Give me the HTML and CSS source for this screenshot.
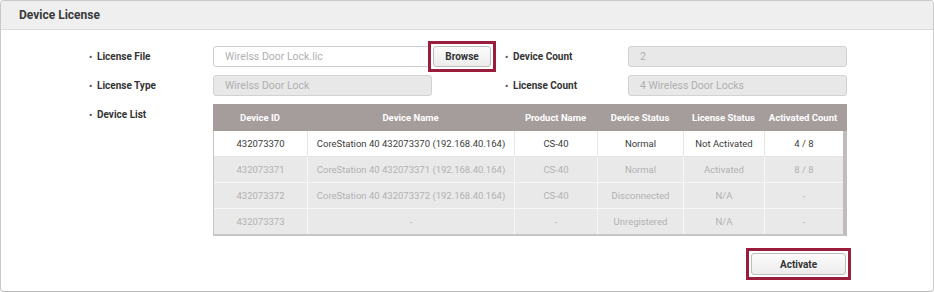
FILE: index.html
```html
<!DOCTYPE html>
<html lang="en">
<head>
    <meta charset="UTF-8">
    <meta name="viewport" content="width=device-width, initial-scale=1.0">
    <title>Device License</title>
    <link rel="stylesheet" href="styles.css">
</head>
<body>

<div class="panel">
    <div class="panel-head">Device License</div>

    <div class="panel-body">
        <div class="form-grid">
            <label class="field-label">License File</label>
            <div class="field-box">
                <input type="text" class="text-input file-input" value="Wirelss Door Lock.lic" readonly>
                <span class="marked mark-browse"><button class="btn btn-browse">Browse</button></span>
            </div>
            <label class="field-label">Device Count</label>
            <div class="field-box">
                <input type="text" class="text-input disabled" value="2" readonly>
            </div>

            <label class="field-label">License Type</label>
            <div class="field-box">
                <input type="text" class="text-input disabled" value="Wirelss Door Lock" readonly>
            </div>
            <label class="field-label">License Count</label>
            <div class="field-box">
                <input type="text" class="text-input disabled" value="4 Wireless Door Locks" readonly>
            </div>

            <label class="field-label">Device List</label>
            <div class="device-list">
                <div class="list-row list-head">
                    <div class="cell">Device ID</div>
                    <div class="cell">Device Name</div>
                    <div class="cell">Product Name</div>
                    <div class="cell">Device Status</div>
                    <div class="cell">License Status</div>
                    <div class="cell">Activated Count</div>
                    <div class="cell"></div>
                </div>
                <div class="list-body">
                    <div class="list-row active">
                        <div class="cell">432073370</div>
                        <div class="cell">CoreStation 40 432073370 (192.168.40.164)</div>
                        <div class="cell">CS-40</div>
                        <div class="cell">Normal</div>
                        <div class="cell">Not Activated</div>
                        <div class="cell">4 / 8</div>
                    </div>
                    <div class="list-row">
                        <div class="cell">432073371</div>
                        <div class="cell">CoreStation 40 432073371 (192.168.40.164)</div>
                        <div class="cell">CS-40</div>
                        <div class="cell">Normal</div>
                        <div class="cell">Activated</div>
                        <div class="cell">8 / 8</div>
                    </div>
                    <div class="list-row">
                        <div class="cell">432073372</div>
                        <div class="cell">CoreStation 40 432073372 (192.168.40.164)</div>
                        <div class="cell">CS-40</div>
                        <div class="cell">Disconnected</div>
                        <div class="cell">N/A</div>
                        <div class="cell">-</div>
                    </div>
                    <div class="list-row last">
                        <div class="cell">432073373</div>
                        <div class="cell">-</div>
                        <div class="cell">-</div>
                        <div class="cell">Unregistered</div>
                        <div class="cell">N/A</div>
                        <div class="cell">-</div>
                    </div>
                </div>
            </div>
        </div>

        <div class="actions">
            <span class="marked"><button class="btn btn-activate">Activate</button></span>
        </div>
    </div>
</div>

</body>
</html>
```

FILE: styles.css
```css
body {
    margin: 0;
    background-color: #ffffff;
    font-family: Roboto, "Liberation Sans", Arial, sans-serif;
    color: #444444;
}
.panel {
    width: 932px;
    height: 290px;
    border: 1px solid #c9c9c9;
    border-bottom-color: #b9b9b9;
    border-radius: 4px;
    overflow: hidden;
}
.panel-head {
    height: 28px;
    line-height: 28px;
    padding-left: 18px;
    background-color: #efefef;
    border-bottom: 1px solid #dcdcdc;
    font-size: 12px;
    font-weight: bold;
    color: #3a3a3a;
}
.panel-body {
    padding: 16px 0 0 88px;
}
.form-grid {
    display: grid;
    grid-template-columns: 124px 292px 123px 219px;
    row-gap: 8px;
}
.field-label {
    height: 21px;
    line-height: 21px;
    font-size: 10px;
    font-weight: bold;
    color: #333333;
}
.field-label::before {
    content: "•";
    display: inline-block;
    width: 8px;
    color: #555555;
    font-size: 9px;
}
.field-box {
    display: flex;
    align-items: center;
}
.text-input {
    box-sizing: border-box;
    width: 219px;
    height: 21px;
    padding: 0 11px;
    border: 1px solid #cfcfcf;
    border-radius: 3px;
    background-color: #ffffff;
    font-family: Roboto, "Liberation Sans", Arial, sans-serif;
    font-size: 10.5px;
    color: #b0b0b0;
    outline: none;
}
.text-input.file-input {
    width: 217px;
}
.text-input.disabled {
    background-color: #e8e8e8;
    border-color: #d2d2d2;
}
.marked {
    display: inline-flex;
    padding: 2px;
    border: 3px solid #9b1d3d;
    background-color: #ffffff;
}
.mark-browse {
    margin: -5px 0 -5px -2px;
}
.btn {
    box-sizing: border-box;
    border: 1px solid #bdbdbd;
    border-radius: 3px;
    background: linear-gradient(#fcfcfc, #ececec);
    font-family: Roboto, "Liberation Sans", Arial, sans-serif;
    font-size: 10px;
    font-weight: bold;
    color: #333333;
    cursor: pointer;
    padding: 0;
}
.btn-browse {
    width: 58px;
    height: 21px;
}
.device-list {
    grid-column: 2 / 5;
    width: 634px;
}
.list-row {
    display: grid;
    grid-template-columns: 94px 207px 83px 86px 81px 78px;
}
.list-head {
    grid-template-columns: 94px 207px 83px 86px 81px 78px 5px;
    height: 27px;
    background-color: #a59c9c;
}
.list-body {
    border-left: 1px solid #c6c6c6;
    border-right: 5px solid #c1bcbc;
    border-bottom: 2px solid #c6c6c6;
}
.cell {
    height: 25px;
    line-height: 25px;
    text-align: center;
    font-size: 9.5px;
    color: #b2b2b2;
    background-color: #e9e9e9;
    border-right: 1px solid #f7f7f7;
    border-bottom: 1px solid #f7f7f7;
    white-space: nowrap;
    overflow: hidden;
}
.list-head .cell {
    height: 27px;
    line-height: 27px;
    background-color: transparent;
    color: #ffffff;
    font-weight: bold;
    border: none;
}
.list-row.active .cell {
    background-color: #ffffff;
    color: #3c3c3c;
    border-color: #e6e6e6;
}
.list-row .cell:last-child {
    border-right: none;
}
.list-row.last .cell {
    border-bottom: none;
}
.actions {
    display: flex;
    justify-content: flex-end;
    width: 762px;
    margin-top: 12px;
}
.btn-activate {
    width: 95px;
    height: 22px;
}
```
